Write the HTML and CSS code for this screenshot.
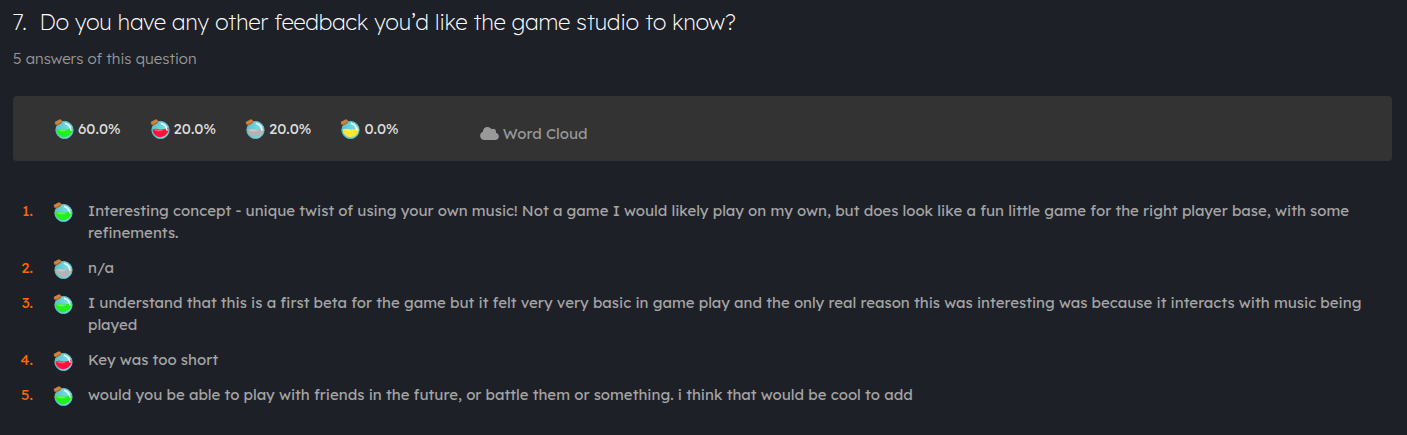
FILE: index.html
```
<!DOCTYPE html>
<html lang="en">

<head>
    <meta charset="UTF-8">
    <meta name="viewport" content="width=device-width, initial-scale=1.0">
    <title>Feedback</title>
    <link rel="stylesheet" href="styles.css">
</head>

<body>
    <main class="question">
        <h2 class="question-title">7.&nbsp; Do you have any other feedback you’d like the game studio to know?</h2>
        <p class="answer-count">5 answers of this question</p>

        <div class="summary">
            <ul class="sentiments">
                <li><svg class="potion green"><use href="#potion" /></svg>60.0%</li>
                <li><svg class="potion red"><use href="#potion" /></svg>20.0%</li>
                <li><svg class="potion gray"><use href="#potion" /></svg>20.0%</li>
                <li><svg class="potion yellow"><use href="#potion" /></svg>0.0%</li>
            </ul>
            <button type="button" class="word-cloud">
                <svg class="cloud" viewBox="0 0 640 512" aria-hidden="true">
                    <path fill="currentColor" d="M537.6 226.6c4.100-10.700 6.400-22.400 6.400-34.600 0-53-43-96-96-96-19.700 0-38.100 6-53.300 16.200C367 64.200 315.300 32 256 32c-88.400 0-160 71.600-160 160 0 2.700.1 5.400.2 8.100C40.200 219.800 0 273.200 0 336c0 79.500 64.500 144 144 144h368c70.700 0 128-57.300 128-128 0-61.900-44-113.600-102.400-125.400z" />
                </svg>
                Word Cloud
            </button>
        </div>

        <ol class="answers">
            <li>
                <span class="number">1.</span>
                <svg class="potion green"><use href="#potion" /></svg>
                <p>Interesting concept - unique twist of using your own music! Not a game I would likely play on my own, but does look like a fun little game for the right player base, with some refinements.</p>
            </li>
            <li>
                <span class="number">2.</span>
                <svg class="potion gray"><use href="#potion" /></svg>
                <p>n/a</p>
            </li>
            <li>
                <span class="number">3.</span>
                <svg class="potion green"><use href="#potion" /></svg>
                <p>I understand that this is a first beta for the game but it felt very very basic in game play and the only real reason this was interesting was because it interacts with music being played</p>
            </li>
            <li>
                <span class="number">4.</span>
                <svg class="potion red"><use href="#potion" /></svg>
                <p>Key was too short</p>
            </li>
            <li>
                <span class="number">5.</span>
                <svg class="potion green"><use href="#potion" /></svg>
                <p>would you be able to play with friends in the future, or battle them or something. i think that would be cool to add</p>
            </li>
        </ol>
    </main>

    <!-- Shared icons -->
    <svg class="sprite" width="0" height="0" aria-hidden="true">
        <defs>
            <linearGradient id="glass" x1="0" y1="0" x2="1" y2="0">
                <stop offset="0" stop-color="#55c3cd" />
                <stop offset="1" stop-color="#7fe3ef" />
            </linearGradient>
        </defs>
        <symbol id="potion" viewBox="0 0 20 20">
            <circle cx="10.5" cy="11" r="8.6" fill="url(#glass)" stroke="#62c4cc" stroke-width="1" />
            <path d="M2.600 10.400 Q6 9 9.500 10.200 Q14 11 18.200 8.500 A7.900 7.900 0 1 1 2.600 10.400Z" fill="currentColor" />
            <path d="M3.400 10.800 Q6 9.600 9.500 10.600 Q12 11.200 14 10.800 Q9 14.400 3.400 10.800Z" fill="#fff" opacity="0.3" />
            <path d="M11.500 4.400 Q16 5.600 17 11" fill="none" stroke="#fff" stroke-width="1.600" stroke-linecap="round" opacity="0.9" />
            <path d="M0.800 3.200 L5.600 0.500 Q7.600 0.200 8 2 L8 4 L3.600 6.600 Q1.200 6.400 0.800 4.600Z" fill="#a8672e" />
            <path d="M0.800 3 L5.600 0.400 Q7.800 0.200 8 2.400 L3.200 5.200 Q1 5 0.800 3Z" fill="#cb8440" />
        </symbol>
    </svg>
</body>

</html>
```
FILE: styles.css
```
* {
    box-sizing: border-box;
}

body {
    margin: 0;
    background-color: #1e2027;
    color: #a5a5a5;
    font-family: Lexend, Inter, sans-serif;
    font-size: 15px;
    line-height: 22px;
}

.sprite {
    display: block;
}

.question {
    padding: 8px 15px 24px 13px;
}

.question-title {
    margin: 0;
    color: #fff;
    font-size: 22px;
    font-weight: 200;
    line-height: 28px;
}

.answer-count {
    margin: 12px 0 26px;
    color: #999;
    font-weight: 300;
}

.summary {
    display: flex;
    align-items: center;
    gap: 81px;
    min-height: 65px;
    padding: 0 41px;
    background-color: #333;
    border-radius: 4px;
}

.sentiments {
    display: flex;
    gap: 29px;
    margin: 0;
    padding: 0;
    list-style: none;
    color: #ddd;
}

.sentiments li {
    display: flex;
    align-items: center;
    gap: 4px;
}

.potion {
    flex: none;
    width: 20px;
    height: 20px;
}

.green {
    color: #22f01c;
}

.red {
    color: #ff1238;
}

.gray {
    color: #b4b4b4;
}

.yellow {
    color: #ffe52c;
}

.word-cloud {
    display: flex;
    align-items: center;
    gap: 4px;
    padding: 10px 0 0;
    background: none;
    border: none;
    color: #999;
    font-family: inherit;
    font-size: 15px;
    cursor: pointer;
}

.cloud {
    width: 19px;
    height: 15px;
}

.answers {
    margin: 39px 0 0;
    padding: 0;
    list-style: none;
}

.answers li {
    display: flex;
    margin-bottom: 13px;
}

.answers p {
    margin: 0;
}

.answers .number {
    flex: none;
    width: 20px;
    color: #f60;
    text-align: right;
}

.answers .potion {
    margin: 2px 15px 0 20px;
}
```
